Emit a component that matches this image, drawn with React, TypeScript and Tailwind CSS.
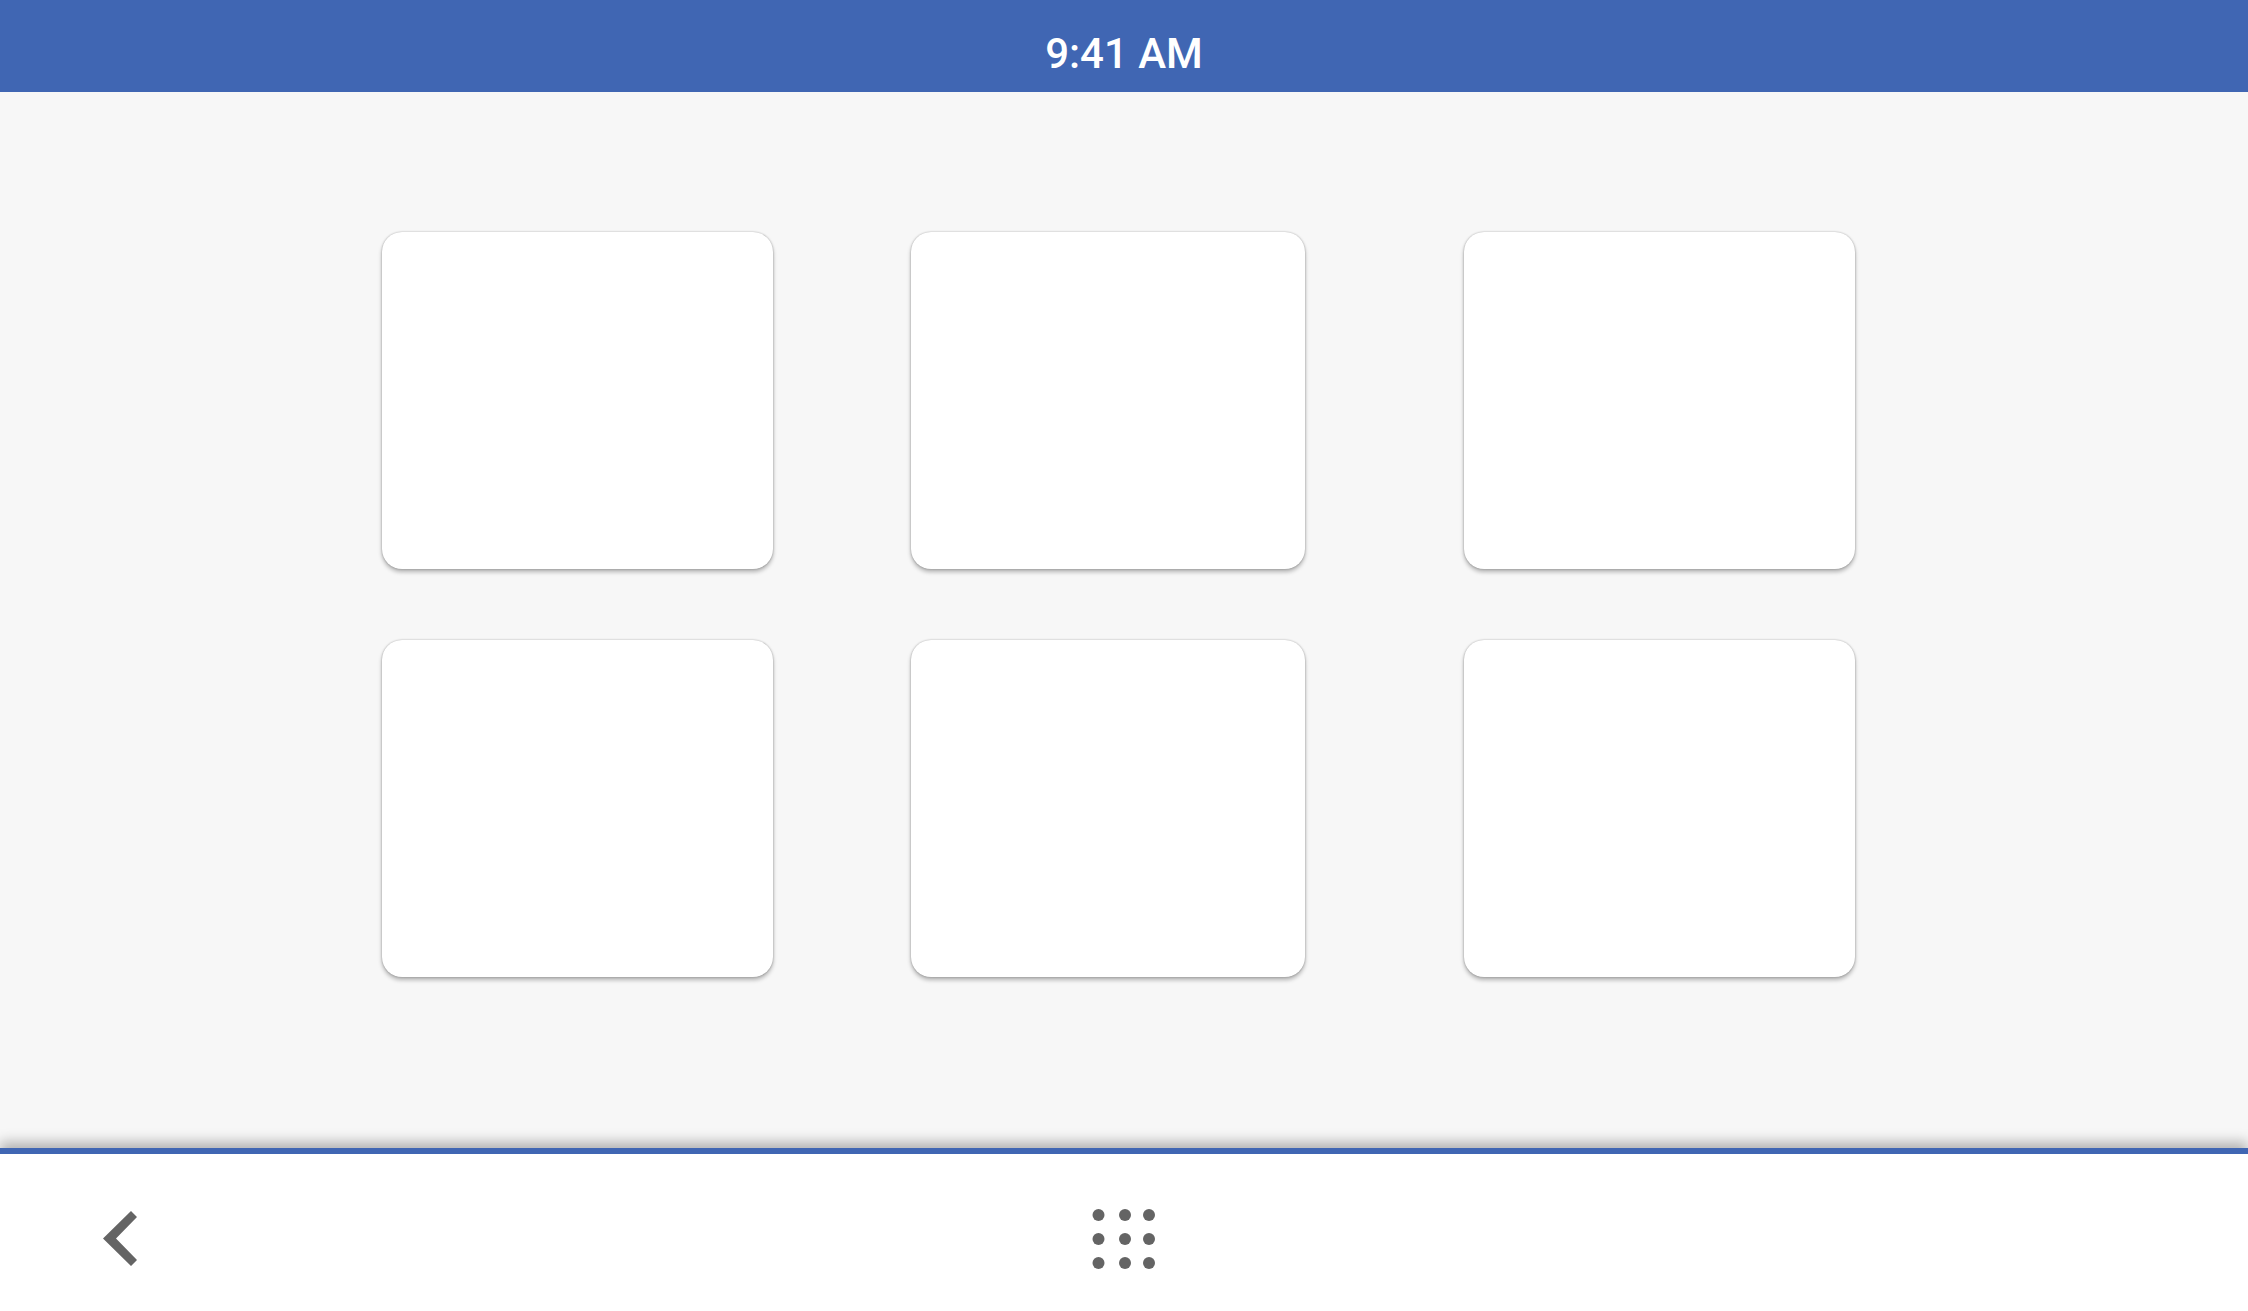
import type { ReactNode } from "react";

interface Tile {
  id: string;
  column: string;
}

// Columns 2, 4 and 6 of the home grid hold tiles, the others are gutters
const tiles: Tile[] = [
  { id: "tile-1", column: "col-start-2" },
  { id: "tile-2", column: "col-start-4" },
  { id: "tile-3", column: "col-start-6" },
  { id: "tile-4", column: "col-start-2" },
  { id: "tile-5", column: "col-start-4" },
  { id: "tile-6", column: "col-start-6" },
];

const BackIcon = () => (
  <svg viewBox="0 0 34 55" className="h-[55px] w-[34px]" fill="currentColor" aria-hidden="true">
    <path d="M28 0 L34 6 L13 27.5 L34 49 L28 55 L0 27.5 Z" />
  </svg>
);

const AppsIcon = () => (
  <svg viewBox="0 0 64 60" className="h-[60px] w-[64px]" fill="currentColor" aria-hidden="true">
    {[6, 30, 54].map((cy) =>
      [6.5, 33, 57].map((cx) => <circle key={`${cx}-${cy}`} cx={cx} cy={cy} r="6" />)
    )}
  </svg>
);

interface NavButtonProps {
  label: string;
  className?: string;
  children: ReactNode;
}

const NavButton = ({ label, className = "", children }: NavButtonProps) => (
  <button type="button" aria-label={label} className={`flex items-center text-[#646464] ${className}`}>
    {children}
  </button>
);

const App = () => {
  return (
    <div className="flex min-h-screen flex-col bg-[#f7f7f7] font-[Roboto,sans-serif]">
      {/* Status bar */}
      <header className="bg-[#4066b3] pt-8 pb-4 text-center text-[42px] leading-[44px] font-medium text-white">
        <time dateTime="09:41">9:41 AM</time>
      </header>

      {/* Home tiles */}
      <main className="grid flex-1 grid-cols-[382fr_391fr_138fr_394fr_159fr_391fr_393fr] content-start gap-y-[71px] pt-[140px]">
        {tiles.map((tile) => (
          <button
            key={tile.id}
            type="button"
            aria-label={tile.id}
            className={`h-[337px] rounded-[20px] bg-white shadow-[0_0_2px_rgba(0,0,0,0.3),0_3px_4px_rgba(0,0,0,0.28)] ${tile.column}`}
          />
        ))}
      </main>

      {/* Bottom navigation */}
      <nav className="grid h-[163px] grid-cols-3 items-center border-t-6 border-[#4066b3] bg-white pt-3 shadow-[0_-6px_12px_rgba(0,0,0,0.28)]">
        <NavButton label="Back" className="ml-[103px] justify-self-start">
          <BackIcon />
        </NavButton>
        <NavButton label="All apps" className="justify-self-center">
          <AppsIcon />
        </NavButton>
      </nav>
    </div>
  );
};

export default App;
